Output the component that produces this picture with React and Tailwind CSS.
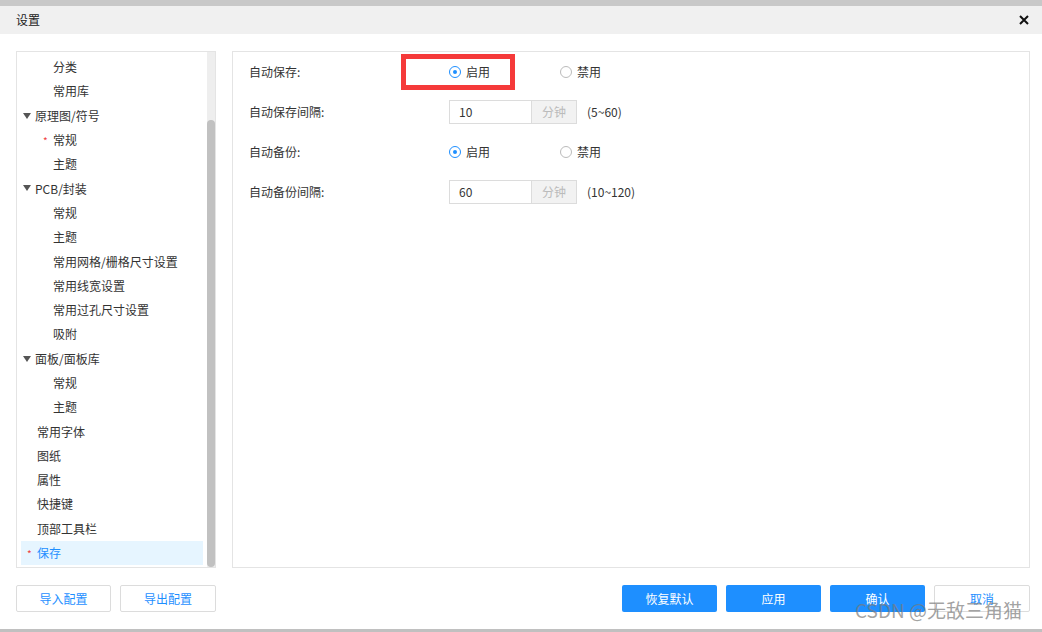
import React from 'react';

const FONT = { fontFamily: '"Noto Sans CJK SC", "Liberation Sans", sans-serif' };

// 左侧树：level 0 顶级，1 子项
const tree = [
  { label: '分类', level: 1 },
  { label: '常用库', level: 1 },
  { label: '原理图/符号', level: 0, group: true },
  { label: '常规', level: 1, star: true },
  { label: '主题', level: 1 },
  { label: 'PCB/封装', level: 0, group: true },
  { label: '常规', level: 1 },
  { label: '主题', level: 1 },
  { label: '常用网格/栅格尺寸设置', level: 1 },
  { label: '常用线宽设置', level: 1 },
  { label: '常用过孔尺寸设置', level: 1 },
  { label: '吸附', level: 1 },
  { label: '面板/面板库', level: 0, group: true },
  { label: '常规', level: 1 },
  { label: '主题', level: 1 },
  { label: '常用字体', level: 0 },
  { label: '图纸', level: 0 },
  { label: '属性', level: 0 },
  { label: '快捷键', level: 0 },
  { label: '顶部工具栏', level: 0 },
  { label: '保存', level: 0, star: true, active: true },
];

function TreeRow({ item }) {
  return (
    <div
      className={`relative flex h-[24.3px] items-center text-[12px] ${
        item.active ? 'bg-[#e6f5ff] text-[#1e8fff]' : 'text-[#333]'
      }`}
    >
      {item.group && (
        <span className="absolute left-[2px] top-[9px] h-0 w-0 border-x-[4px] border-t-[6px] border-x-transparent border-t-[#555]" />
      )}
      {item.star && (
        <span
          className={`absolute top-[5px] text-[10px] text-[#f04040] ${
            item.level === 1 ? 'left-[22px]' : 'left-[6px]'
          }`}
        >
          *
        </span>
      )}
      <span className={item.level === 1 ? 'pl-[32px]' : item.group ? 'pl-[14px]' : 'pl-[16px]'}>
        {item.label}
      </span>
    </div>
  );
}

function Radio({ checked, label }) {
  return (
    <div className="flex items-center gap-[5px] text-[12px] text-[#333]">
      <span
        className={`flex h-[12px] w-[12px] items-center justify-center rounded-full border ${
          checked ? 'border-[#1e8fff]' : 'border-[#bbb]'
        }`}
      >
        {checked && <span className="h-[4px] w-[4px] rounded-full bg-[#1e8fff]" />}
      </span>
      <span>{label}</span>
    </div>
  );
}

function RadioRow({ label, boxed }) {
  return (
    <div className="flex h-[40px] items-center">
      <div className="w-[216px] pl-[16px] text-[12px] text-[#333]">{label}</div>
      <div className="relative flex items-center">
        {boxed && (
          <span className="absolute left-[-48px] top-1/2 h-[36px] w-[114px] -translate-y-1/2 border-[5px] border-[#f53a3a]" />
        )}
        <div className="w-[111px]">
          <Radio checked label="启用" />
        </div>
        <Radio label="禁用" />
      </div>
    </div>
  );
}

function InputRow({ label, value, range }) {
  return (
    <div className="flex h-[40px] items-center">
      <div className="w-[216px] pl-[16px] text-[12px] text-[#333]">{label}</div>
      <div className="flex h-[24px] items-stretch border border-[#dcdcdc] text-[12px]">
        <div className="flex w-[81px] items-center pl-[9px] text-[#333]">{value}</div>
        <div className="flex w-[45px] items-center justify-center border-l border-[#dcdcdc] bg-[#f2f2f2] text-[#bbb]">
          分钟
        </div>
      </div>
      <div className="pl-[10px] text-[12px] text-[#333]">{range}</div>
    </div>
  );
}

export default function App() {
  return (
    <div className="relative flex h-[632px] w-[1042px] flex-col bg-white" style={FONT}>
      <div className="h-[6px] bg-[#c8c8c8]" />
      {/* 标题栏 */}
      <div className="flex h-[28px] items-center justify-between bg-[#f0f0f0] pl-[16px] pr-[13px]">
        <span className="text-[12px] text-[#222]">设置</span>
        <svg width="10" height="10" viewBox="0 0 10 10">
          <path d="M1 1L9 9M9 1L1 9" stroke="#111" strokeWidth="2" />
        </svg>
      </div>

      <div className="flex flex-1 flex-col px-[16px] pr-[12px] pt-[17px]">
        <div className="flex h-[517px] gap-[16px]">
          {/* 左侧树 */}
          <div className="flex w-[200px] border border-[#e4e4e4]">
            <div className="flex-1 pl-[4px] pr-[4px] pt-[3px]">
              {tree.map((item, i) => (
                <TreeRow key={i} item={item} />
              ))}
            </div>
            <div className="flex w-[8px] flex-col bg-[#eeeeee]">
              <div className="h-[68px]" />
              <div className="flex-1 rounded-[4px] bg-[#c1c1c1]" />
            </div>
          </div>

          {/* 右侧设置 */}
          <div className="flex-1 border border-[#e4e4e4]">
            <RadioRow label="自动保存:" boxed />
            <InputRow label="自动保存间隔:" value="10" range="(5~60)" />
            <RadioRow label="自动备份:" />
            <InputRow label="自动备份间隔:" value="60" range="(10~120)" />
          </div>
        </div>

        {/* 底部按钮 */}
        <div className="mt-[17px] flex h-[27px] items-stretch">
          <div className="flex gap-[9px]">
            <button className="w-[95px] rounded-[2px] border border-[#dcdcdc] bg-white text-[12px] text-[#1e8fff]">导入配置</button>
            <button className="w-[96px] rounded-[2px] border border-[#dcdcdc] bg-white text-[12px] text-[#1e8fff]">导出配置</button>
          </div>
          <div className="ml-auto flex gap-[9px]">
            <button className="w-[95px] rounded-[2px] bg-[#1e8fff] text-[12px] text-white">恢复默认</button>
            <button className="w-[95px] rounded-[2px] bg-[#1e8fff] text-[12px] text-white">应用</button>
            <button className="w-[95px] rounded-[2px] bg-[#1e8fff] text-[12px] text-white">确认</button>
            <button className="w-[96px] rounded-[2px] border border-[#dcdcdc] bg-white text-[12px] text-[#1e8fff]">取消</button>
          </div>
        </div>
      </div>

      <div className="h-[3px] bg-[#c0c0c0]" />

      {/* 水印 */}
      <div className="pointer-events-none absolute left-[855px] top-[597px] text-[19px] leading-[26px] text-[#7a7a7a]/70">
        CSDN @无敌三角猫
      </div>
    </div>
  );
}
